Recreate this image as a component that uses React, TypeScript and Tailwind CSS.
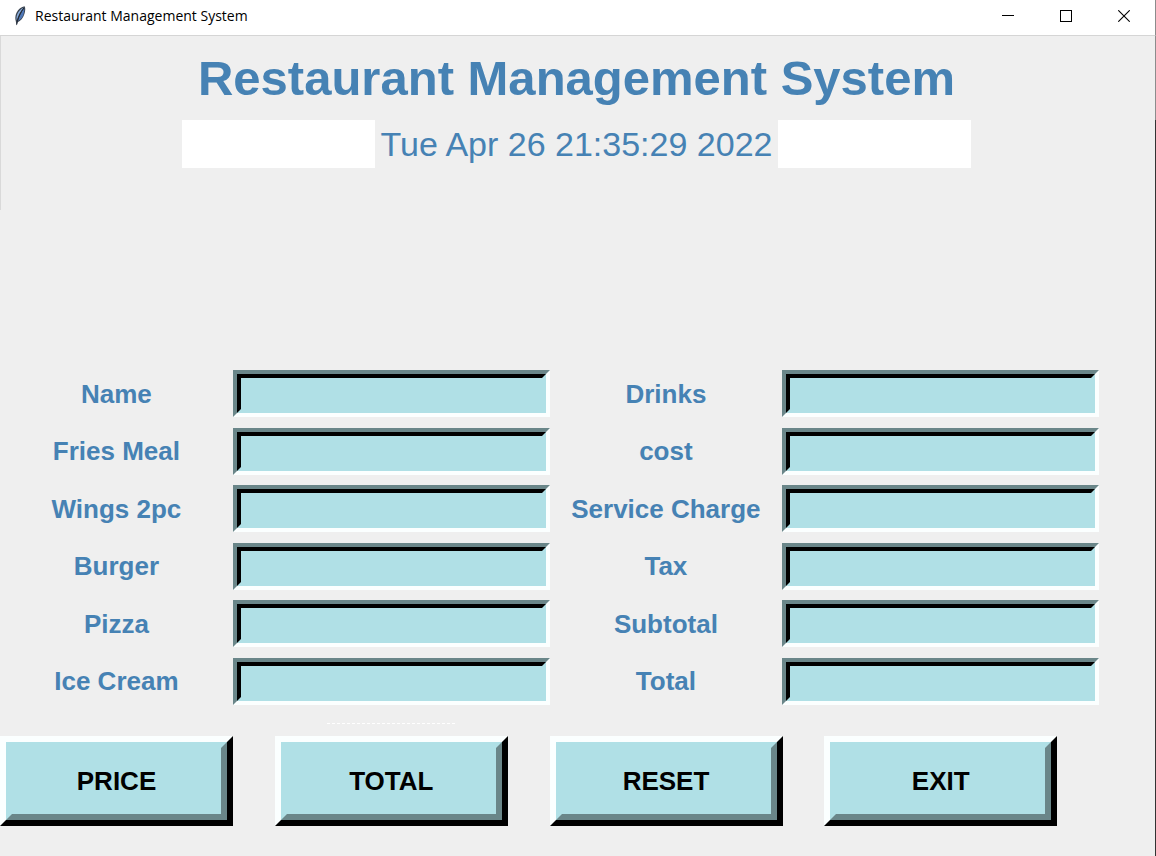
import { useState } from "react";

const LEFT_FIELDS = ["Name", "Fries Meal", "Wings 2pc", "Burger", "Pizza", "Ice Cream"];
const RIGHT_FIELDS = ["Drinks", "cost", "Service Charge", "Tax", "Subtotal", "Total"];
const ACTIONS = ["PRICE", "TOTAL", "RESET", "EXIT"];

function FeatherIcon() {
  return (
    <svg width="14" height="20" viewBox="0 0 14 20" aria-hidden="true">
      <path d="M11.6 0.3C8.6 0.8 5.2 3 3.4 7C2.2 9.8 2 12.6 2.8 15.2L3.6 19.6L4.6 16.2C7.6 15 10.2 12 11.4 8C12.4 5 12.6 2 11.6 0.3Z" fill="#3a434f" />
      <path d="M10.8 1.4C7.6 2.6 5.2 5.4 4 9C3.4 11 3.3 12.8 3.7 14.2C5.2 9.6 7.4 5.2 10.8 1.4Z" fill="#86a9d8" />
      <path d="M11.2 2.4C11.5 5 10.8 8.5 9.2 11.2C8 13 6.6 14.2 5 15C6.2 10.4 8.4 6 11.2 2.4Z" fill="#4f78b8" />
      <path d="M10.8 2C7.6 6.5 5 11 3.7 18.6" stroke="#1a2230" strokeWidth="0.9" fill="none" />
    </svg>
  );
}

function TitleBar() {
  const button = "flex h-8 w-12 items-center justify-center";
  return (
    <header className="flex h-9 items-start justify-between border-r border-b border-r-[#8c8c8c] border-b-[#d5d5d5] bg-white pl-[13px]">
      <div className="flex h-8 items-center gap-2 font-['Open_Sans','Noto_Sans',sans-serif] text-sm text-black">
        <FeatherIcon />
        <span>Restaurant Management System</span>
      </div>
      <div className="flex gap-[10px] pr-[7px]">
        <button type="button" aria-label="Minimize" className={button}>
          <svg width="12" height="12" viewBox="0 0 12 12" shapeRendering="crispEdges">
            <path d="M0 5.5H12" stroke="#000" />
          </svg>
        </button>
        <button type="button" aria-label="Maximize" className={button}>
          <svg width="12" height="12" viewBox="0 0 12 12" shapeRendering="crispEdges">
            <path d="M0.5 0.5H11.5V11.5H0.5Z" stroke="#000" fill="none" />
          </svg>
        </button>
        <button type="button" aria-label="Close" className={button}>
          <svg width="12" height="12" viewBox="0 0 12 12">
            <path d="M0.3 0.3L11.7 11.7M11.7 0.3L0.3 11.7" stroke="#000" strokeWidth="1.1" />
          </svg>
        </button>
      </div>
    </header>
  );
}

function Field({ label }: { label: string }) {
  const [value, setValue] = useState("");
  const id = "field-" + label.toLowerCase().replace(/\s+/g, "-");
  return (
    <div className="grid grid-cols-[233fr_317fr] items-center">
      <label htmlFor={id} className="text-center text-[26px] leading-8 font-bold whitespace-nowrap text-[#4682b4]">
        {label}
      </label>
      <div className="border-4 border-t-[#6a8689] border-r-[#fbffff] border-b-[#fbffff] border-l-[#6a8689]">
        <input
          id={id}
          type="text"
          value={value}
          onChange={(event) => setValue(event.target.value)}
          className="block h-[39px] w-full border-4 border-t-black border-r-[#b0e0e6] border-b-[#b0e0e6] border-l-black bg-[#b0e0e6] px-1 text-2xl text-[#4682b4] outline-none"
        />
      </div>
    </div>
  );
}

function FieldColumn({ labels }: { labels: string[] }) {
  return (
    <div className="grid h-[345px] grid-rows-6">
      {labels.map((label) => (
        <Field key={label} label={label} />
      ))}
    </div>
  );
}

function ActionButton({ label }: { label: string }) {
  return (
    <button
      type="button"
      className="w-[233px] border-6 border-t-[#fbffff] border-r-black border-b-black border-l-[#fbffff]"
    >
      <span className="flex h-[78px] items-center justify-center border-6 border-t-[#b0e0e6] border-r-[#6a8689] border-b-[#6a8689] border-l-[#b0e0e6] bg-[#b0e0e6] text-[26px] leading-8 font-bold text-black">
        {label}
      </span>
    </button>
  );
}

export default function App() {
  return (
    <div className="flex min-h-screen flex-col bg-[#efefef] font-['Liberation_Sans',Arial,sans-serif]">
      <TitleBar />
      <main className="flex grow flex-col">
        <h1 className="border-r border-l border-r-[#8c8c8c] border-l-[#d9d9d9] pt-3 pr-[3px] pb-3 text-center text-[49px] leading-[60px] font-bold text-[#4682b4]">
          Restaurant Management System
        </h1>
        <div className="flex h-[90px] items-start justify-center border-r border-l border-r-[#333333] border-l-[#d9d9d9] pr-[3px]">
          <div className="h-12 w-[193px] bg-white" />
          <time className="w-[403px] text-center text-[34px] leading-[48px] whitespace-nowrap text-[#4682b4]">
            Tue Apr 26 21:35:29 2022
          </time>
          <div className="h-12 w-[193px] bg-white" />
        </div>
        <form
          className="grow border-r border-[#333333] pt-[155px] pr-14"
          onSubmit={(event) => event.preventDefault()}
        >
          <div className="grid grid-cols-2">
            <FieldColumn labels={LEFT_FIELDS} />
            <FieldColumn labels={RIGHT_FIELDS} />
          </div>
          <div className="grid h-[26px] grid-cols-[233fr_317fr_550fr] pt-[13px]">
            <div className="col-start-2 w-32 justify-self-center border-t border-dashed border-white" />
          </div>
          <div className="grid grid-cols-[233fr_317fr_233fr_317fr] justify-items-center">
            {ACTIONS.map((label) => (
              <ActionButton key={label} label={label} />
            ))}
          </div>
        </form>
      </main>
    </div>
  );
}
